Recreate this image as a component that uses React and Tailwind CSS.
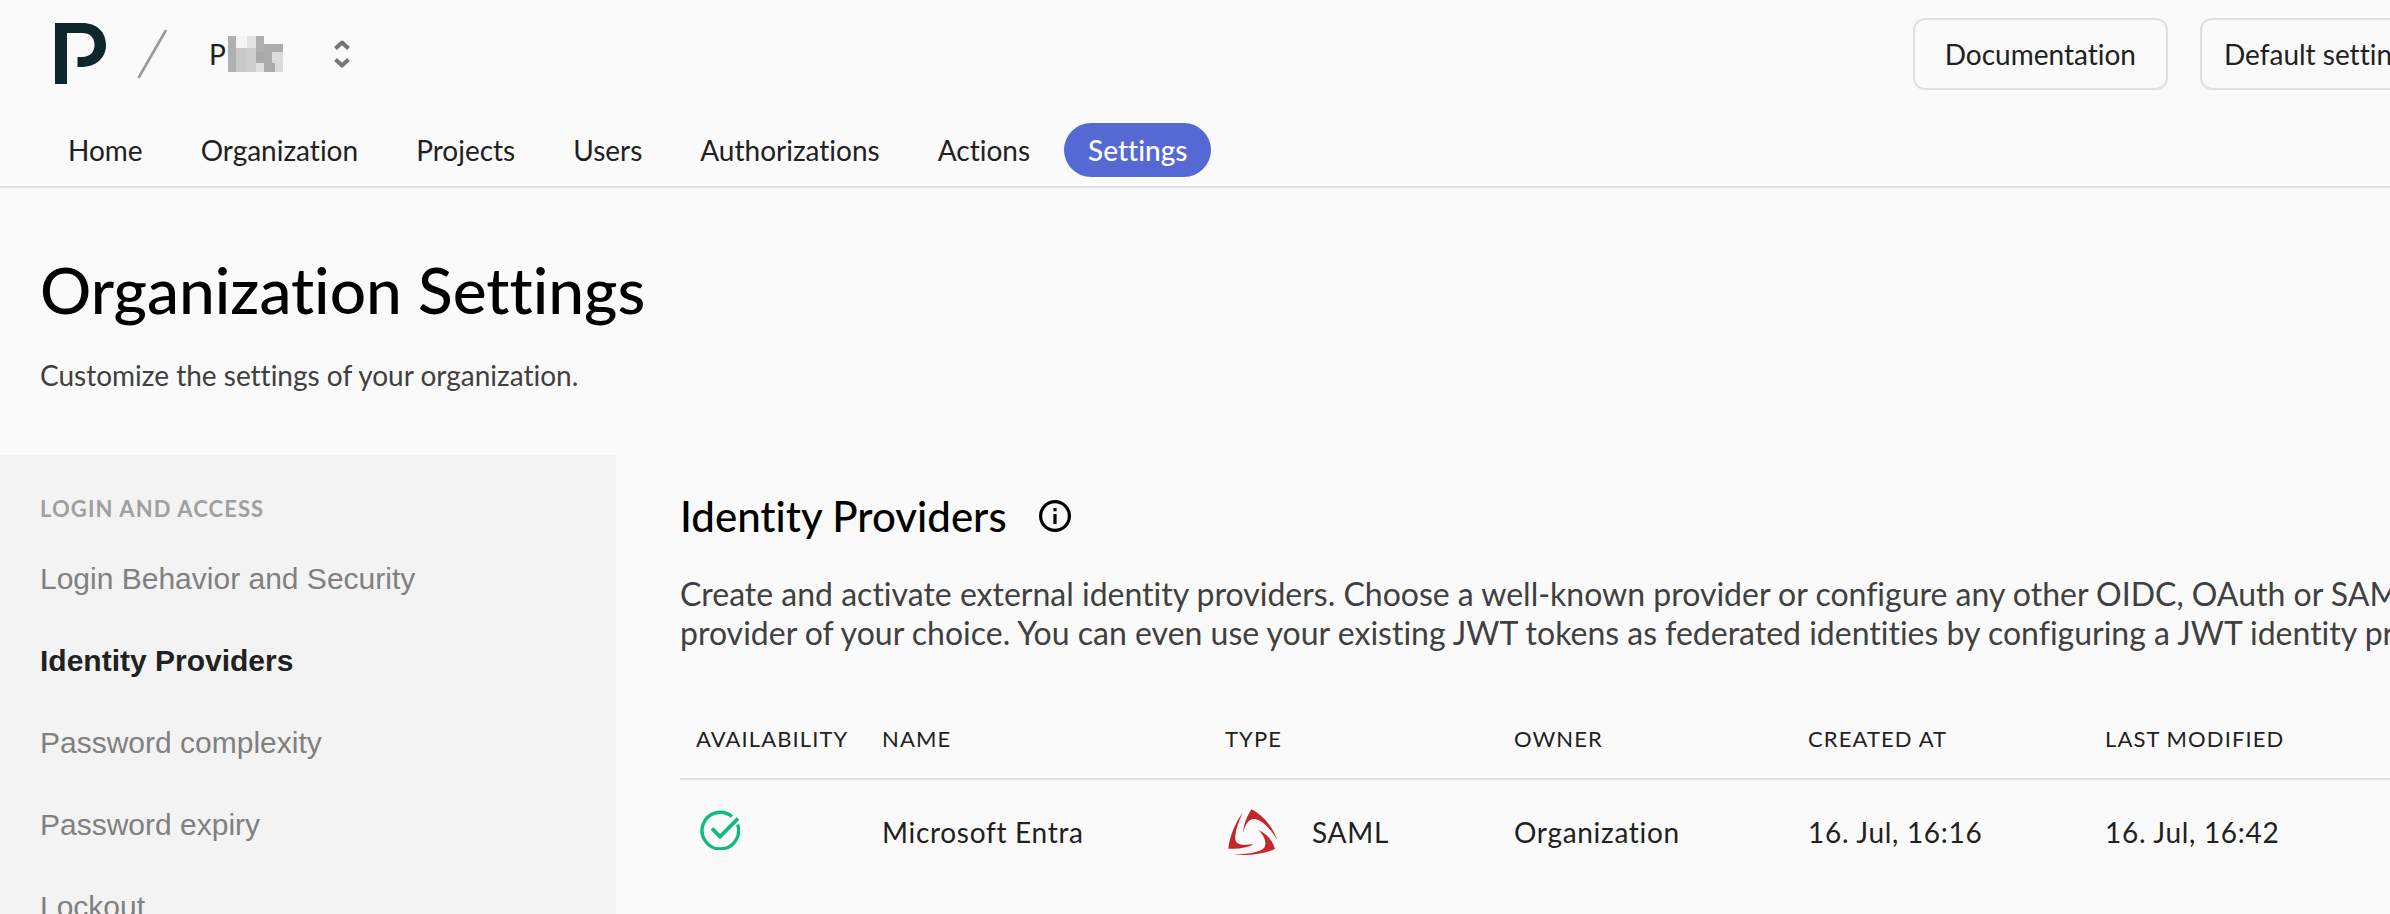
import React from 'react'

const NAV = ['Home', 'Organization', 'Projects', 'Users', 'Authorizations', 'Actions', 'Settings']

const SIDE_ITEMS = [
  'Login Behavior and Security',
  'Identity Providers',
  'Password complexity',
  'Password expiry',
  'Lockout',
]

const COLUMNS = ['AVAILABILITY', 'NAME', 'TYPE', 'OWNER', 'CREATED AT', 'LAST MODIFIED']

const PROVIDERS = [
  {
    name: 'Microsoft Entra',
    type: 'SAML',
    owner: 'Organization',
    created: '16. Jul, 16:16',
    modified: '16. Jul, 16:42',
  },
]

// [x, y, width, height, fill]
const MOSAIC = [
  [0, 0, 8, 36, '#b0b0b0'],
  [8, 0, 11, 12, '#f5f5f5'],
  [19, 0, 9, 12, '#e3e3e3'],
  [8, 12, 11, 24, '#cacaca'],
  [19, 12, 9, 24, '#cdcdcd'],
  [28, 0, 8, 16, '#afafaf'],
  [28, 16, 8, 11, '#a9a9a9'],
  [28, 27, 8, 9, '#e0e0e0'],
  [36, 8, 19, 8, '#acacac'],
  [36, 16, 8, 20, '#ababab'],
  [44, 16, 11, 11, '#dcdcdc'],
  [44, 27, 3, 9, '#a8a8a8'],
  [47, 27, 8, 9, '#dadada'],
]

function Logo() {
  return (
    <svg width="52" height="62" viewBox="0 0 52 62" fill="#0e262d" aria-hidden="true">
      <path d="M0 0H27C42 0 51 9 51 22C51 35 41 44 26 44H22.500V34H27C35 34 39.500 29 39.500 22C39.500 14.500 35 10 27 10H12V61H0Z" />
    </svg>
  )
}

function Slash() {
  return (
    <svg width="30" height="50" viewBox="0 0 30 50" fill="none" aria-hidden="true">
      <path d="M2 48L28.500 2" stroke="#999" strokeWidth="2.600" strokeLinecap="round" />
    </svg>
  )
}

function Mosaic() {
  return (
    <svg width="55" height="36" viewBox="0 0 55 36" shapeRendering="crispEdges" aria-hidden="true">
      {MOSAIC.map(([x, y, w, h, fill], i) => (
        <rect key={i} x={x} y={y} width={w} height={h} fill={fill} />
      ))}
    </svg>
  )
}

function UpDown() {
  return (
    <svg width="16" height="28" viewBox="0 0 16 28" fill="none" aria-hidden="true">
      <path
        d="M1.500 8.500L8 2.500L14.500 8.500M1.500 19.500L8 25.500L14.500 19.500"
        stroke="#757575"
        strokeWidth="4"
        strokeLinejoin="round"
      />
    </svg>
  )
}

function InfoIcon() {
  return (
    <svg width="32" height="32" viewBox="0 0 32 32" fill="none" aria-hidden="true">
      <circle cx="16" cy="16" r="14.400" stroke="#000" strokeWidth="3.200" />
      <path d="M14.400 8h3.200v3.200h-3.200zM14.400 14h3.200v10h-3.200z" fill="#000" />
    </svg>
  )
}

function CheckIcon() {
  return (
    <svg width="40" height="40" viewBox="0 0 40 40" fill="none" stroke="#10b981" strokeWidth="3.300" aria-hidden="true">
      <path d="M32 6.500A18.300 18.300 0 1 0 37.600 14.500" />
      <path d="M12 18.500L20 26.500L38 8.500" strokeWidth="3.800" />
    </svg>
  )
}

function SamlIcon() {
  return (
    <svg width="50" height="46" viewBox="84 62 150 138" fill="#c1272d" aria-hidden="true">
      <path d="M128 73C108 98 88 145 85 181C118 183 142 178 161 168C140 170 112 172 107 158C102 140 114 102 128 73Z" />
      <path d="M155 63C189 82 216 112 232 155C212 122 186 92 160 92C144 94 136 108 130 133C130 110 140 84 155 63Z" />
      <path d="M225 182C190 197 145 203 102 199C140 197 182 192 193 178C202 160 190 140 175 124C204 139 218 158 225 182Z" />
    </svg>
  )
}

function Header() {
  return (
    <header className="border-b-2 border-[#e0e0e0]">
      <div className="flex h-[108px] items-center pl-[55px]">
        <a href="#" aria-label="Start">
          <Logo />
        </a>
        <div className="ml-[30px]">
          <Slash />
        </div>
        <button className="ml-[42px] flex items-center text-[28px] leading-9">
          <span>P</span>
          <span className="ml-0.5">
            <Mosaic />
          </span>
          <span className="ml-[51px]">
            <UpDown />
          </span>
        </button>
        <div className="ml-auto flex items-center gap-8">
          <a href="#" className="flex h-[72px] items-center rounded-xl border-2 border-[#e0e0e0] px-[30px] text-[28px]">
            Documentation
          </a>
          <div className="w-[190px] overflow-hidden">
            <button className="flex h-[72px] items-center whitespace-nowrap rounded-xl border-2 border-[#e0e0e0] px-[22px] text-[28px]">
              Default settings
            </button>
          </div>
        </div>
      </div>
      <nav className="flex gap-[10px] px-11 pt-[15px] pb-[9px]">
        {NAV.map(item => (
          <a
            key={item}
            href="#"
            className={
              item === 'Settings'
                ? 'flex h-[54px] items-center rounded-full bg-[#5469d4] px-6 text-[28px] font-medium text-white'
                : 'flex h-[54px] items-center rounded-full px-6 text-[28px]'
            }
          >
            {item}
          </a>
        ))}
      </nav>
    </header>
  )
}

function Sidebar() {
  return (
    <aside className="w-[616px] shrink-0 bg-[#f3f3f3] px-10 pt-10">
      <h3 className="text-[22px] leading-7 font-bold tracking-wider text-[#a0a0a0]">LOGIN AND ACCESS</h3>
      <ul className="mt-[14px] font-['Liberation_Sans',Arial,sans-serif]">
        {SIDE_ITEMS.map(item => (
          <li key={item}>
            <a
              href="#"
              className={
                item === 'Identity Providers'
                  ? 'flex h-[82px] items-center text-[30px] font-bold text-[#212121]'
                  : 'flex h-[82px] items-center text-[30px] text-[#808080]'
              }
            >
              {item}
            </a>
          </li>
        ))}
      </ul>
    </aside>
  )
}

function ProviderTable() {
  return (
    <table className="mt-[46px] w-full table-fixed text-left">
      <colgroup>
        <col className="w-[186px]" />
        <col className="w-[343px]" />
        <col className="w-[289px]" />
        <col className="w-[294px]" />
        <col className="w-[297px]" />
        <col />
      </colgroup>
      <thead>
        <tr className="h-[81px] border-b-2 border-[#e0e0e0]">
          {COLUMNS.map(col => (
            <th key={col} className="pl-4 text-[22px] font-normal tracking-wider">
              {col}
            </th>
          ))}
        </tr>
      </thead>
      <tbody>
        {PROVIDERS.map(row => (
          <tr key={row.name} className="h-[104px] text-[28px] tracking-wide">
            <td className="pb-1 pl-5">
              <CheckIcon />
            </td>
            <td className="pl-4">{row.name}</td>
            <td className="pl-[19px]">
              <div className="flex items-center gap-[34px]">
                <SamlIcon />
                {row.type}
              </div>
            </td>
            <td className="pl-4">{row.owner}</td>
            <td className="pl-4">{row.created}</td>
            <td className="pl-4">{row.modified}</td>
          </tr>
        ))}
      </tbody>
    </table>
  )
}

export default function App() {
  return (
    <div className="flex h-screen flex-col overflow-hidden bg-[#fafafa] font-[Lato,sans-serif] text-[#212121] [font-variant-ligatures:none]">
      <Header />
      <section className="px-10 pt-[62px] pb-[58px]">
        <h1 className="text-[64px] leading-[80px] font-medium text-black">Organization Settings</h1>
        <p className="mt-6 text-[28px] leading-[43px] text-[#404040]">Customize the settings of your organization.</p>
      </section>
      <div className="flex grow">
        <Sidebar />
        <main className="min-w-0 grow pt-[34px] pl-16">
          <div className="flex items-center gap-8">
            <h2 className="text-[42px] leading-[54px] font-medium text-black">Identity Providers</h2>
            <button aria-label="Info">
              <InfoIcon />
            </button>
          </div>
          <p className="mt-[31px] whitespace-nowrap text-[32px] leading-[39px] text-[#404040]">
            Create and activate external identity providers. Choose a well-known provider or configure any other OIDC, OAuth or SAML
            <br />
            provider of your choice. You can even use your existing JWT tokens as federated identities by configuring a JWT identity provider.
          </p>
          <ProviderTable />
        </main>
      </div>
    </div>
  )
}
